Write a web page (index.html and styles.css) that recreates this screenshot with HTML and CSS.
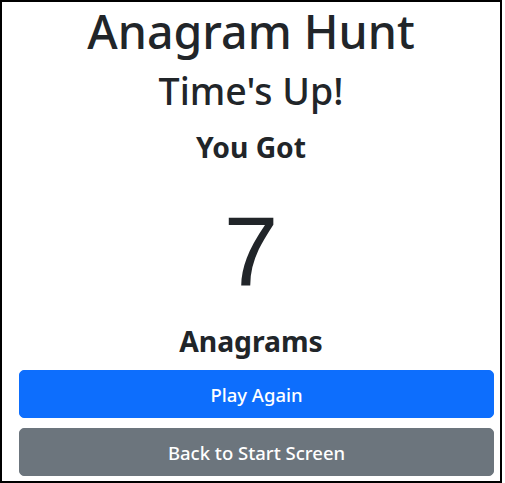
FILE: index.html
```html
<!DOCTYPE html>
<html lang="en">
<head>
<meta charset="utf-8">
<title>Anagram Hunt</title>
<link rel="stylesheet" href="styles.css">
</head>
<body>
<div class="frame">
  <h1 class="title">Anagram Hunt</h1>
  <h2 class="subtitle">Time's Up!</h2>
  <h3 class="label label-top">You Got</h3>
  <div class="score">7</div>
  <h3 class="label label-bottom">Anagrams</h3>
  <div class="actions">
    <button class="btn btn-primary">Play Again</button>
    <button class="btn btn-secondary">Back to Start Screen</button>
  </div>
</div>
</body>
</html>
```
FILE: styles.css
```css
html, body {
  margin: 0;
  padding: 0;
  background: #fff;
}
.frame {
  box-sizing: border-box;
  width: 502px;
  height: 483px;
  border: 2px solid #000;
  font-family: "Noto Sans", "Open Sans", sans-serif;
  color: #212529;
  text-align: center;
  display: flex;
  flex-direction: column;
}
.title {
  margin: -4px 0 0;
  font-size: 46.5px;
  line-height: 66px;
  font-weight: 500;
}
.subtitle {
  margin: -1px 0 0;
  font-size: 37.5px;
  line-height: 56px;
  font-weight: 500;
}
.label {
  margin: 0;
  font-size: 28.3px;
  line-height: 44px;
  font-weight: 700;
}
.label-top {
  margin-top: 6px;
}
.score {
  margin-top: 14px;
  font-family: "Liberation Sans", Arial, sans-serif;
  font-size: 98px;
  line-height: 136px;
}
.label-bottom {
  margin-top: 0;
}
.actions {
  margin: 7px 6px 0 17px;
  display: flex;
  flex-direction: column;
  gap: 10px;
}
.btn {
  display: block;
  width: 100%;
  height: 48px;
  border: 1px solid transparent;
  border-radius: 5px;
  font-family: "Noto Sans", "Open Sans", sans-serif;
  font-size: 18.5px;
  font-weight: 500;
  color: #fff;
  padding: 0 16px;
}
.btn-primary {
  background: #0d6efd;
  border-color: #0d6efd;
}
.btn-secondary {
  background: #6c757d;
  border-color: #6c757d;
}
```
